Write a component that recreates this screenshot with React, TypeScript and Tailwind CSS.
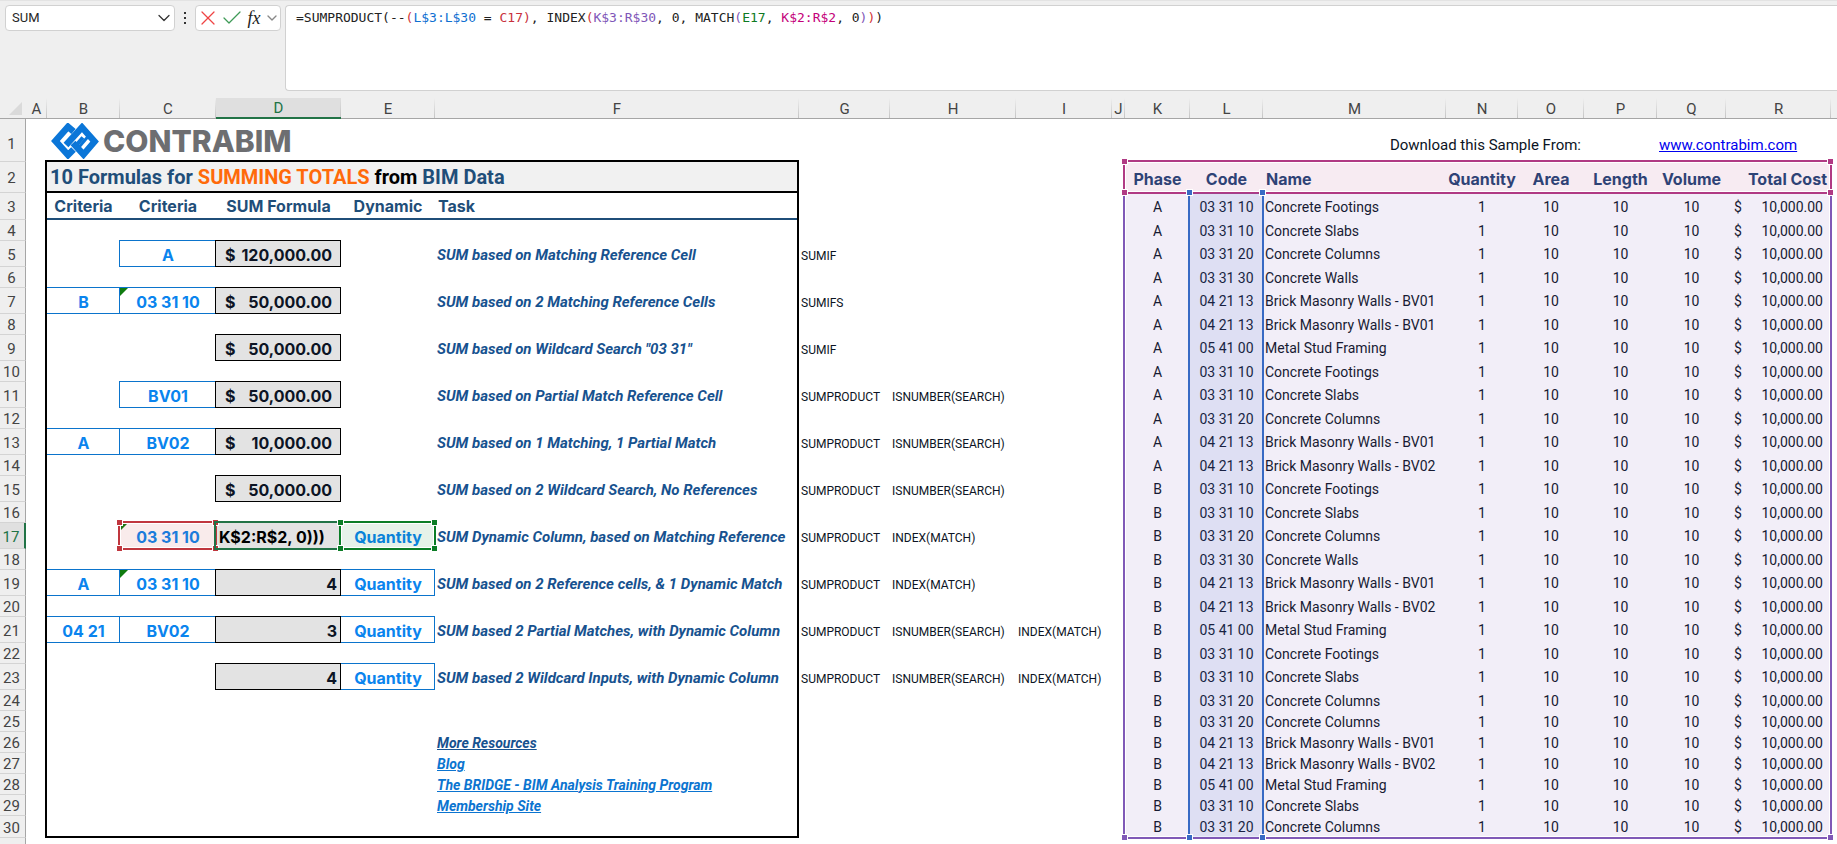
import { Check, ChevronDown, X } from "lucide-react";
import type { ReactNode } from "react";

const COLUMNS = [
  { id: "A", width: 21 },
  { id: "B", width: 73 },
  { id: "C", width: 96 },
  { id: "D", width: 125 },
  { id: "E", width: 94 },
  { id: "F", width: 364 },
  { id: "G", width: 91 },
  { id: "H", width: 126 },
  { id: "I", width: 96 },
  { id: "J", width: 13 },
  { id: "K", width: 65 },
  { id: "L", width: 73 },
  { id: "M", width: 183 },
  { id: "N", width: 72 },
  { id: "O", width: 66 },
  { id: "P", width: 73 },
  { id: "Q", width: 69 },
  { id: "R", width: 105 },
];

const ROW_HEADER_WIDTH = 26;
const COLUMN_HEADER_HEIGHT = 21;

const ROWS = Array.from({ length: 30 }, (_, i) => i + 1);

const rowHeight = (row: number) => {
  if (row === 1) return 43;
  if (row === 2) return 31;
  if (row === 3) return 27;
  if (row === 30) return 22;
  return row < 24 && row % 2 === 1 ? 26 : 21;
};

type Task = {
  b?: string;
  c?: string;
  flag?: boolean;
  total?: string;
  count?: string;
  e?: string;
  task: string;
  uses: string[];
};

const TASKS: Record<number, Task> = {
  5: { c: "A", total: "120,000.00", task: "SUM based on Matching Reference Cell", uses: ["SUMIF"] },
  7: { b: "B", c: "03 31 10", flag: true, total: "50,000.00", task: "SUM based on 2 Matching Reference Cells", uses: ["SUMIFS"] },
  9: { total: "50,000.00", task: 'SUM based on Wildcard Search "03 31"', uses: ["SUMIF"] },
  11: { c: "BV01", total: "50,000.00", task: "SUM based on Partial Match Reference Cell", uses: ["SUMPRODUCT", "ISNUMBER(SEARCH)"] },
  13: { b: "A", c: "BV02", total: "10,000.00", task: "SUM based on 1 Matching, 1 Partial Match", uses: ["SUMPRODUCT", "ISNUMBER(SEARCH)"] },
  15: { total: "50,000.00", task: "SUM based on 2 Wildcard Search, No References", uses: ["SUMPRODUCT", "ISNUMBER(SEARCH)"] },
  17: { c: "03 31 10", flag: true, e: "Quantity", task: "SUM Dynamic Column, based on Matching Reference", uses: ["SUMPRODUCT", "INDEX(MATCH)"] },
  19: { b: "A", c: "03 31 10", flag: true, count: "4", e: "Quantity", task: "SUM based on 2 Reference cells, & 1 Dynamic Match", uses: ["SUMPRODUCT", "INDEX(MATCH)"] },
  21: { b: "04 21", c: "BV02", count: "3", e: "Quantity", task: "SUM based 2 Partial Matches, with Dynamic Column", uses: ["SUMPRODUCT", "ISNUMBER(SEARCH)", "INDEX(MATCH)"] },
  23: { count: "4", e: "Quantity", task: "SUM based 2 Wildcard Inputs, with Dynamic Column", uses: ["SUMPRODUCT", "ISNUMBER(SEARCH)", "INDEX(MATCH)"] },
};

const LINKS: Record<number, string> = {
  26: "More Resources",
  27: "Blog",
  28: "The BRIDGE - BIM Analysis Training Program",
  29: "Membership Site",
};

// Rows 3 to 30 of the BIM export: phase, code, name
const BIM_DATA = [
  ["A", "03 31 10", "Concrete Footings"],
  ["A", "03 31 10", "Concrete Slabs"],
  ["A", "03 31 20", "Concrete Columns"],
  ["A", "03 31 30", "Concrete Walls"],
  ["A", "04 21 13", "Brick Masonry Walls - BV01"],
  ["A", "04 21 13", "Brick Masonry Walls - BV01"],
  ["A", "05 41 00", "Metal Stud Framing"],
  ["A", "03 31 10", "Concrete Footings"],
  ["A", "03 31 10", "Concrete Slabs"],
  ["A", "03 31 20", "Concrete Columns"],
  ["A", "04 21 13", "Brick Masonry Walls - BV01"],
  ["A", "04 21 13", "Brick Masonry Walls - BV02"],
  ["B", "03 31 10", "Concrete Footings"],
  ["B", "03 31 10", "Concrete Slabs"],
  ["B", "03 31 20", "Concrete Columns"],
  ["B", "03 31 30", "Concrete Walls"],
  ["B", "04 21 13", "Brick Masonry Walls - BV01"],
  ["B", "04 21 13", "Brick Masonry Walls - BV02"],
  ["B", "05 41 00", "Metal Stud Framing"],
  ["B", "03 31 10", "Concrete Footings"],
  ["B", "03 31 10", "Concrete Slabs"],
  ["B", "03 31 20", "Concrete Columns"],
  ["B", "03 31 20", "Concrete Columns"],
  ["B", "04 21 13", "Brick Masonry Walls - BV01"],
  ["B", "04 21 13", "Brick Masonry Walls - BV02"],
  ["B", "05 41 00", "Metal Stud Framing"],
  ["B", "03 31 10", "Concrete Slabs"],
  ["B", "03 31 20", "Concrete Columns"],
];

const FORMULA = [
  { text: "=SUMPRODUCT(--", color: "text-[#222222]" },
  { text: "(", color: "text-[#d13438]" },
  { text: "L$3:L$30", color: "text-[#0f6fd1]" },
  { text: " = ", color: "text-[#222222]" },
  { text: "C17)", color: "text-[#c8313c]" },
  { text: ", INDEX", color: "text-[#222222]" },
  { text: "(", color: "text-[#d13438]" },
  { text: "K$3:R$30", color: "text-[#7f57b8]" },
  { text: ", 0, MATCH", color: "text-[#222222]" },
  { text: "(", color: "text-[#7f57b8]" },
  { text: "E17", color: "text-[#0f7a22]" },
  { text: ", ", color: "text-[#222222]" },
  { text: "K$2:R$2", color: "text-[#c4007a]" },
  { text: ", 0", color: "text-[#222222]" },
  { text: ")", color: "text-[#7f57b8]" },
  { text: ")", color: "text-[#d13438]" },
  { text: ")", color: "text-[#222222]" },
];

const columnLeft = (id: string) => {
  const index = COLUMNS.findIndex((column) => column.id === id);
  return COLUMNS.slice(0, index).reduce((sum, column) => sum + column.width, ROW_HEADER_WIDTH);
};

const columnRight = (id: string) => columnLeft(id) + COLUMNS.find((column) => column.id === id)!.width;

const rowTop = (row: number) => ROWS.slice(0, row - 1).reduce((sum, r) => sum + rowHeight(r), COLUMN_HEADER_HEIGHT);

type RangeProps = {
  from: [string, number];
  to: [string, number];
  className: string;
  handle?: string;
  overhang?: number;
};

// Coloured outline lying over a block of cells, centred on the grid lines
function Range({ from, to, className, handle, overhang = 1 }: RangeProps) {
  const left = columnLeft(from[0]) - 2;
  const top = rowTop(from[1]) - 2;
  const width = columnRight(to[0]) + overhang - left;
  const height = rowTop(to[1]) + rowHeight(to[1]) + overhang - top;

  return (
    <div className={`absolute pointer-events-none ${className}`} style={{ left, top, width, height }}>
      {handle && (
        <>
          <span className={`absolute -left-1 -top-1 size-[7px] border border-white ${handle}`} />
          <span className={`absolute -right-1 -top-1 size-[7px] border border-white ${handle}`} />
          <span className={`absolute -left-1 -bottom-1 size-[7px] border border-white ${handle}`} />
          <span className={`absolute -right-1 -bottom-1 size-[7px] border border-white ${handle}`} />
        </>
      )}
    </div>
  );
}

function Logo() {
  return (
    <div className="flex items-center gap-1 pl-1">
      <svg viewBox="0 0 48 36" className="w-12 h-9 shrink-0" fill="none" stroke="#0b76d8" strokeWidth="6.5">
        <path d="M22.5 8.5 17 3.8 4.4 18 17 32 22.5 26.5" />
        <path d="M15 22 31 4.4 43.6 18.5 32.5 31.5 22 20" />
        <path d="M24.5 23 32 14.5" strokeWidth="4" />
        <path d="M37.5 13 28.5 23.5" strokeWidth="3" />
      </svg>
      <span className="font-['Inter'] font-extrabold text-[30px] leading-9 text-[#6d6e71]">CONTRABIM</span>
    </div>
  );
}

function TopBar() {
  return (
    <div className="flex items-start pl-[5px] pt-1 pb-[7px] border-t border-[#e3e3e3] bg-[#efefef] shrink-0">
      <div className="flex items-center w-[170px] h-[26px] rounded border border-[#d1d1d1] bg-white">
        <input
          aria-label="Name Box"
          defaultValue="SUM"
          className="w-0 grow pl-1.5 text-[13px] leading-5 text-[#262626] outline-none"
        />
        <button aria-label="Open name list">
          <ChevronDown className="size-5" color="#333333" strokeWidth={1.5} />
        </button>
      </div>
      <div className="flex flex-col items-center justify-center gap-[3px] w-5 h-[26px]">
        <span className="size-0.5 bg-[#333333]" />
        <span className="size-0.5 bg-[#333333]" />
        <span className="size-0.5 bg-[#333333]" />
      </div>
      <div className="flex items-center w-[86px] h-[26px] rounded border border-[#d1d1d1] bg-white">
        <button aria-label="Cancel">
          <X className="size-6" color="#ef4444" strokeWidth={1.25} />
        </button>
        <button aria-label="Enter">
          <Check className="size-6" color="#3f9b57" strokeWidth={1.25} />
        </button>
        <button
          aria-label="Insert Function"
          className="w-5 font-['Liberation_Serif'] italic text-[18px] leading-5 text-[#222222]"
        >
          fx
        </button>
        <button aria-label="More functions">
          <ChevronDown className="size-4" color="#888888" strokeWidth={2} />
        </button>
      </div>
      <div
        role="textbox"
        aria-label="Formula Bar"
        contentEditable
        suppressContentEditableWarning
        className="grow ml-1 h-[86px] pl-2.5 pt-0.5 rounded-l border border-r-0 border-[#d1d1d1] bg-white font-['DejaVu_Sans_Mono'] text-[13px] leading-5 whitespace-pre outline-none"
      >
        {FORMULA.map((part, i) => (
          <span key={i} className={part.color}>
            {part.text}
          </span>
        ))}
      </div>
    </div>
  );
}

function ColumnHeaders() {
  return (
    <thead>
      <tr className="h-[21px] bg-[#efefef]">
        <th aria-label="Select all" className="border-b border-[#a6a6a6]">
          <svg viewBox="0 0 13 13" className="size-[13px] ml-[9px]">
            <path d="M13 0V13H0Z" fill="#dadada" />
          </svg>
        </th>
        {COLUMNS.map(({ id }) => (
          <th
            key={id}
            scope="col"
            className={`relative text-[15px] leading-[18px] font-normal ${
              id === "D"
                ? "pt-px bg-[#dfdfdf] text-[#217346] border-b-2 border-[#217346]"
                : "pt-0.5 text-[#444444] border-b border-[#a6a6a6]"
            }`}
          >
            {id}
            <span className="absolute right-0 inset-y-0 w-px bg-linear-to-b from-transparent to-[#c4c4c4]" />
          </th>
        ))}
        <th className="border-b border-[#a6a6a6]" />
      </tr>
    </thead>
  );
}

function InputCell({ value, flag, open }: { value?: string; flag?: boolean; open?: boolean }) {
  if (!value) return <td />;
  return (
    <td
      className={`relative pt-0.5 text-center font-['Inter'] font-bold text-[16px] text-[#0a84ee] after:absolute after:-top-px after:right-0 after:bottom-0 after:border after:border-[#0b74cc] ${
        open ? "after:left-0 after:border-l-0" : "after:-left-px"
      }`}
    >
      {flag && <span className="absolute left-0 top-0 size-2 bg-[#0f7b0f] [clip-path:polygon(0_0,100%_0,0_100%)]" />}
      {value}
    </td>
  );
}

const RESULT =
  "relative pt-0.5 bg-[#e3e3e3] font-['Inter'] font-bold text-[16px] text-[#0c1424] after:absolute after:-top-px after:-left-px after:right-0 after:bottom-0 after:border after:border-black";

function ResultCell({ item }: { item: Task }) {
  if (item.total) {
    return (
      <td className={RESULT}>
        <div className="flex justify-between px-[9px]">
          <span>$</span>
          <span>{item.total}</span>
        </div>
      </td>
    );
  }
  if (item.count) return <td className={`${RESULT} text-right pr-1`}>{item.count}</td>;
  return (
    <td className="bg-[#e3e3e3]">
      <input
        aria-label="Cell D17"
        defaultValue="K$2:R$2, 0)))"
        className="block w-full pl-[3px] pt-0.5 font-['Inter'] font-bold text-[16px] leading-5 text-black outline-none"
      />
    </td>
  );
}

const TASK_HEADING = "pt-px font-['Inter'] font-bold text-[16px] text-[#1f4e79] border-b-2 border-[#1f4e79]";

function TaskCells({ row }: { row: number }) {
  const item = TASKS[row];
  if (row === 1) {
    return (
      <>
        <td />
        <td colSpan={5}>
          <Logo />
        </td>
        <td colSpan={4} />
      </>
    );
  }
  if (row === 2) {
    return (
      <>
        <td />
        <th
          colSpan={5}
          className="pl-[3px] text-left font-bold text-[20px] leading-6 bg-[#f1f1f1] text-[#1f4e79] border-b-2 border-black"
        >
          10 Formulas for <span className="text-[#ff6a0a]">SUMMING TOTALS</span> <span className="text-black">from</span> BIM
          Data
        </th>
        <td colSpan={4} />
      </>
    );
  }
  if (row === 3) {
    return (
      <>
        <td />
        <th className={TASK_HEADING}>Criteria</th>
        <th className={TASK_HEADING}>Criteria</th>
        <th className={TASK_HEADING}>SUM Formula</th>
        <th className={TASK_HEADING}>Dynamic</th>
        <th className={`${TASK_HEADING} pl-[3px] text-left`}>Task</th>
        <td colSpan={4} />
      </>
    );
  }
  if (item) {
    return (
      <>
        <td />
        <InputCell value={item.b} open />
        <InputCell value={item.c} flag={item.flag} />
        <ResultCell item={item} />
        <InputCell value={item.e} open />
        <td className="pl-0.5 pt-0.5 font-bold italic text-[15px] text-[#17528f]">{item.task}</td>
        {[0, 1, 2].map((i) => (
          <td key={i} className="pl-0.5 pt-1 text-[12px] text-[#0c1424]">
            {item.uses[i]}
          </td>
        ))}
        <td />
      </>
    );
  }
  return (
    <>
      <td colSpan={5} />
      <td className="pl-0.5">
        {LINKS[row] && (
          <a
            href="#"
            className={`font-bold italic underline ${row === 26 ? "text-[#17528f]" : "text-[#0b74d0]"}`}
          >
            {LINKS[row]}
          </a>
        )}
      </td>
      <td colSpan={4} />
    </>
  );
}

function BimHeader({ children, className = "text-center" }: { children: ReactNode; className?: string }) {
  return (
    <th scope="col" className={`pt-0.5 font-['Inter'] font-bold text-[16px] text-[#1f4475] ${className}`}>
      {children}
    </th>
  );
}

function BimCells({ row }: { row: number }) {
  if (row === 1) {
    return (
      <>
        <td colSpan={2} />
        <td colSpan={3} className="pt-2 pr-[3px] text-right text-[15px]">
          Download this Sample From:
        </td>
        <td />
        <td colSpan={2} className="pt-2 pl-0.5 text-[15px]">
          <a href="#" className="text-[#0000ee] underline">
            www.contrabim.com
          </a>
        </td>
      </>
    );
  }
  if (row === 2) {
    return (
      <>
        <BimHeader>Phase</BimHeader>
        <BimHeader>Code</BimHeader>
        <BimHeader className="pl-[3px] text-left">Name</BimHeader>
        <BimHeader>Quantity</BimHeader>
        <BimHeader>Area</BimHeader>
        <BimHeader>Length</BimHeader>
        <BimHeader>Volume</BimHeader>
        <BimHeader className="pr-1 text-right">Total Cost</BimHeader>
      </>
    );
  }
  const data = BIM_DATA[row - 3];
  return (
    <>
      <td className="text-center">{data[0]}</td>
      <td className="text-center">{data[1]}</td>
      <td className="pl-0.5">{data[2]}</td>
      <td className="text-center">1</td>
      <td className="text-center">10</td>
      <td className="text-center">10</td>
      <td className="text-center">10</td>
      <td>
        <div className="flex justify-between px-2">
          <span>$</span>
          <span>10,000.00</span>
        </div>
      </td>
    </>
  );
}

export default function App() {
  return (
    <div className="flex flex-col h-screen overflow-hidden bg-white font-['Roboto',sans-serif]">
      <TopBar />
      <div className="relative grow overflow-hidden">
        <table className="table-fixed w-full border-separate border-spacing-0 text-[14px] leading-[18px] text-[#0c1424] whitespace-nowrap">
          <colgroup>
            <col style={{ width: ROW_HEADER_WIDTH }} />
            {COLUMNS.map(({ id, width }) => (
              <col key={id} style={{ width }} />
            ))}
            <col />
          </colgroup>
          <ColumnHeaders />
          <tbody>
            {ROWS.map((row) => (
              <tr key={row} style={{ height: rowHeight(row) }}>
                <th
                  scope="row"
                  className={`pr-0.5 text-[15px] font-normal border-b border-b-[#d4d4d4] ${row === 1 ? "pt-2" : "pt-0.5"} ${
                    row === 17
                      ? "bg-[#e0e0e0] text-[#217346] border-r-2 border-r-[#217346]"
                      : "bg-[#efefef] text-[#444444] border-r border-r-[#a6a6a6]"
                  }`}
                >
                  {row}
                </th>
                <TaskCells row={row} />
                <BimCells row={row} />
                <td />
              </tr>
            ))}
            <tr className="h-[21px]">
              <td className="bg-[#efefef] border-r border-[#a6a6a6]" />
              <td colSpan={COLUMNS.length + 1} />
            </tr>
          </tbody>
        </table>

        <Range from={["B", 2]} to={["F", 30]} overhang={0} className="border-2 border-black" />

        <Range from={["K", 3]} to={["R", 30]} className="border-2 border-[#8059b7] bg-[#7c58b7]/10 shadow-[inset_0_0_0_1px_#fff]" handle="bg-[#8059b7]" />
        <Range from={["K", 2]} to={["R", 2]} className="border-2 border-[#b03a84] bg-[#b03a84]/10 shadow-[inset_0_0_0_1px_#fff]" handle="bg-[#b03a84]" />
        <Range from={["L", 3]} to={["L", 30]} className="border-x-2 border-y-2 border-x-[#386ac4] border-y-transparent bg-clip-padding bg-[#3366cc]/10" handle="bg-[#386ac4]" />
        <Range from={["C", 17]} to={["C", 17]} className="border-2 border-[#c0363e] bg-[#c0363e]/10 shadow-[inset_0_0_0_1px_#fff]" handle="bg-[#c0363e]" />
        <Range from={["D", 17]} to={["D", 17]} className="border-2 border-[#217346]" />
        <Range from={["E", 17]} to={["E", 17]} className="border-2 border-[#0b7d26] bg-[#0b7d26]/10 shadow-[inset_0_0_0_1px_#fff]" handle="bg-[#0b7d26]" />
      </div>
    </div>
  );
}
